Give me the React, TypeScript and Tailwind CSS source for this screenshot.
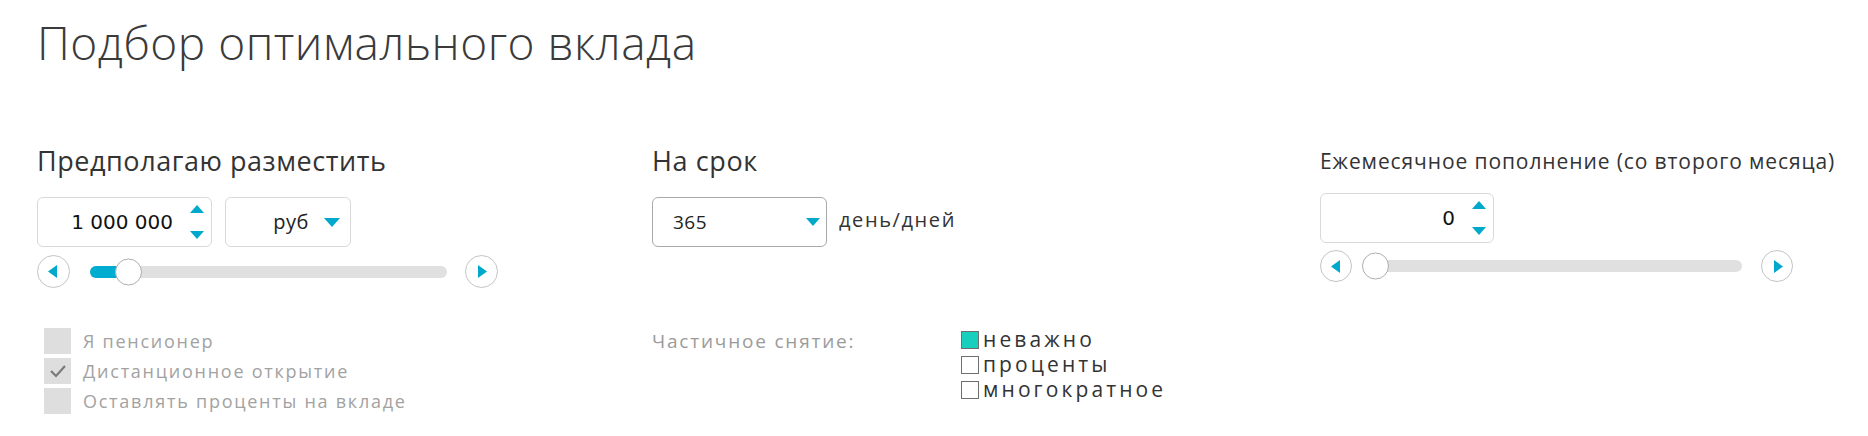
import React from "react";

const TEAL = "#00a9cc";

function TriUp({ w = 14, h = 8 }: { w?: number; h?: number }) {
  return (
    <svg width={w} height={h} viewBox={`0 0 ${w} ${h}`} className="block">
      <polygon points={`0,${h} ${w / 2},0 ${w},${h}`} fill={TEAL} />
    </svg>
  );
}
function TriDown({ w = 14, h = 8 }: { w?: number; h?: number }) {
  return (
    <svg width={w} height={h} viewBox={`0 0 ${w} ${h}`} className="block">
      <polygon points={`0,0 ${w},0 ${w / 2},${h}`} fill={TEAL} />
    </svg>
  );
}

function CircleBtn({ dir, size }: { dir: "left" | "right"; size: number }) {
  return (
    <div
      className="rounded-full border border-[#c4c4c4] bg-white flex items-center justify-center shrink-0"
      style={{ width: size, height: size }}
    >
      <svg width="9" height="13" viewBox="0 0 9 13" className={dir === "left" ? "block -ml-[2px]" : "block ml-[2px]"}>
        {dir === "left" ? (
          <polygon points="9,0 9,13 0,6.5" fill={TEAL} />
        ) : (
          <polygon points="0,0 0,13 9,6.5" fill={TEAL} />
        )}
      </svg>
    </div>
  );
}

function NumberInput({ value, width }: { value: string; width: number }) {
  return (
    <div
      className="h-[50px] border border-[#d9d9d9] rounded-[6px] bg-white flex items-center justify-end pr-[7px] shrink-0"
      style={{ width }}
    >
      <span className="text-[20px] text-[#111] mr-[17px] leading-none" style={{ fontFamily: "'DejaVu Sans', Verdana, sans-serif" }}>
        {value}
      </span>
      <div className="h-full flex flex-col justify-between py-[7px]">
        <TriUp />
        <TriDown />
      </div>
    </div>
  );
}

function Slider({
  circle,
  gapL,
  track,
  gapR,
  thumbCenter,
  fill,
}: {
  circle: number;
  gapL: number;
  track: number;
  gapR: number;
  thumbCenter: number;
  fill: boolean;
}) {
  return (
    <div className="flex items-center" style={{ height: circle }}>
      <CircleBtn dir="left" size={circle} />
      <div className="relative h-[12px] rounded-full bg-[#e0e0e0] shrink-0" style={{ width: track, marginLeft: gapL, marginRight: gapR }}>
        {fill && (
          <div className="absolute left-0 top-0 h-[12px] rounded-full bg-[#00acd0]" style={{ width: thumbCenter + 6 }} />
        )}
        <div
          className="absolute top-1/2 -translate-y-1/2 w-[27px] h-[27px] rounded-full bg-white border border-[#aeaeae]"
          style={{ left: thumbCenter - 13.5 }}
        />
      </div>
      <CircleBtn dir="right" size={circle} />
    </div>
  );
}

function GrayCheck({ label, checked }: { label: string; checked?: boolean }) {
  return (
    <div className="flex items-center h-[26px] ml-[7px]">
      <div className="w-[27px] h-[26px] bg-[#dedede] flex items-center justify-center">
        {checked && (
          <svg width="18" height="14" viewBox="0 0 18 14">
            <polyline points="2,7 7,12 16,2" fill="none" stroke="#7a7a7a" strokeWidth="2.2" />
          </svg>
        )}
      </div>
      <span className="ml-[12px] text-[18px] text-[#a2a2a2] leading-none tracking-[1.75px]">{label}</span>
    </div>
  );
}

function Opt({ label, checked }: { label: string; checked?: boolean }) {
  return (
    <div className="flex items-center h-[25px]">
      <div
        className={
          "w-[18px] h-[18px] border-[1.5px] border-[#6f6f6f] " + (checked ? "bg-[#17cfbd]" : "bg-white")
        }
      />
      <span className="ml-[4px] text-[21px] text-[#333] leading-none tracking-[3.1px]">{label}</span>
    </div>
  );
}

export default function App() {
  return (
    <div
      className="w-[1868px] h-[436px] bg-white overflow-hidden px-[37px]"
      style={{ fontFamily: "'Open Sans', 'Noto Sans', sans-serif" }}
    >
      <h1 className="mt-[19px] text-[46px] font-light leading-none text-[#3a3a3a] tracking-[0.5px]">
        Подбор оптимального вклада
      </h1>

      <div className="flex mt-[82px]">
        {/* Column 1 */}
        <div className="w-[615px] shrink-0 flex flex-col">
          <div className="text-[27px] leading-none text-[#333] h-[27px] tracking-[0.55px]">Предполагаю разместить</div>
          <div className="flex mt-[23px] gap-[13px]">
            <NumberInput value="1 000 000" width={175} />
            <div className="w-[126px] h-[50px] border border-[#d9d9d9] rounded-[6px] flex items-center justify-end pr-[10px]">
              <span className="text-[20px] text-[#222] leading-none mr-[15px] tracking-[0.5px]">руб</span>
              <TriDown w={16} h={9} />
            </div>
          </div>
          <div className="mt-[8px]">
            <Slider circle={33} gapL={20} track={357} gapR={18} thumbCenter={38} fill />
          </div>
          <div className="mt-[40px] flex flex-col gap-[4px]">
            <GrayCheck label="Я пенсионер" />
            <GrayCheck label="Дистанционное открытие" checked />
            <GrayCheck label="Оставлять проценты на вкладе" />
          </div>
        </div>

        {/* Column 2 */}
        <div className="w-[668px] shrink-0 flex flex-col">
          <div className="text-[27px] leading-none text-[#333] h-[27px] tracking-[0.6px]">На срок</div>
          <div className="flex items-center mt-[23px]">
            <div className="w-[175px] h-[50px] border border-[#a9a9a9] rounded-[6px] flex items-center justify-between pl-[20px] pr-[6px]">
              <span className="text-[19px] text-[#222] leading-none tracking-[0.5px]">365</span>
              <TriDown w={14} h={8} />
            </div>
            <span className="ml-[12px] text-[20px] text-[#333] leading-none -mt-[4px] tracking-[1.6px]">день/дней</span>
          </div>
          <div className="flex mt-[80px]">
            <div className="w-[309px] shrink-0 text-[19px] text-[#9b9b9b] leading-[25px] mt-[2px] tracking-[1.8px]">
              Частичное снятие:
            </div>
            <div className="flex flex-col">
              <Opt label="неважно" checked />
              <Opt label="проценты" />
              <Opt label="многократное" />
            </div>
          </div>
        </div>

        {/* Column 3 */}
        <div className="flex-1 flex flex-col">
          <div className="mt-[4px] text-[21px] leading-none text-[#333] tracking-[0.9px] whitespace-nowrap">
            Ежемесячное пополнение (со второго месяца)
          </div>
          <div className="flex mt-[21px]">
            <NumberInput value="0" width={174} />
          </div>
          <div className="mt-[7px]">
            <Slider circle={32} gapL={20} track={370} gapR={19} thumbCenter={3} fill={false} />
          </div>
        </div>
      </div>
    </div>
  );
}
